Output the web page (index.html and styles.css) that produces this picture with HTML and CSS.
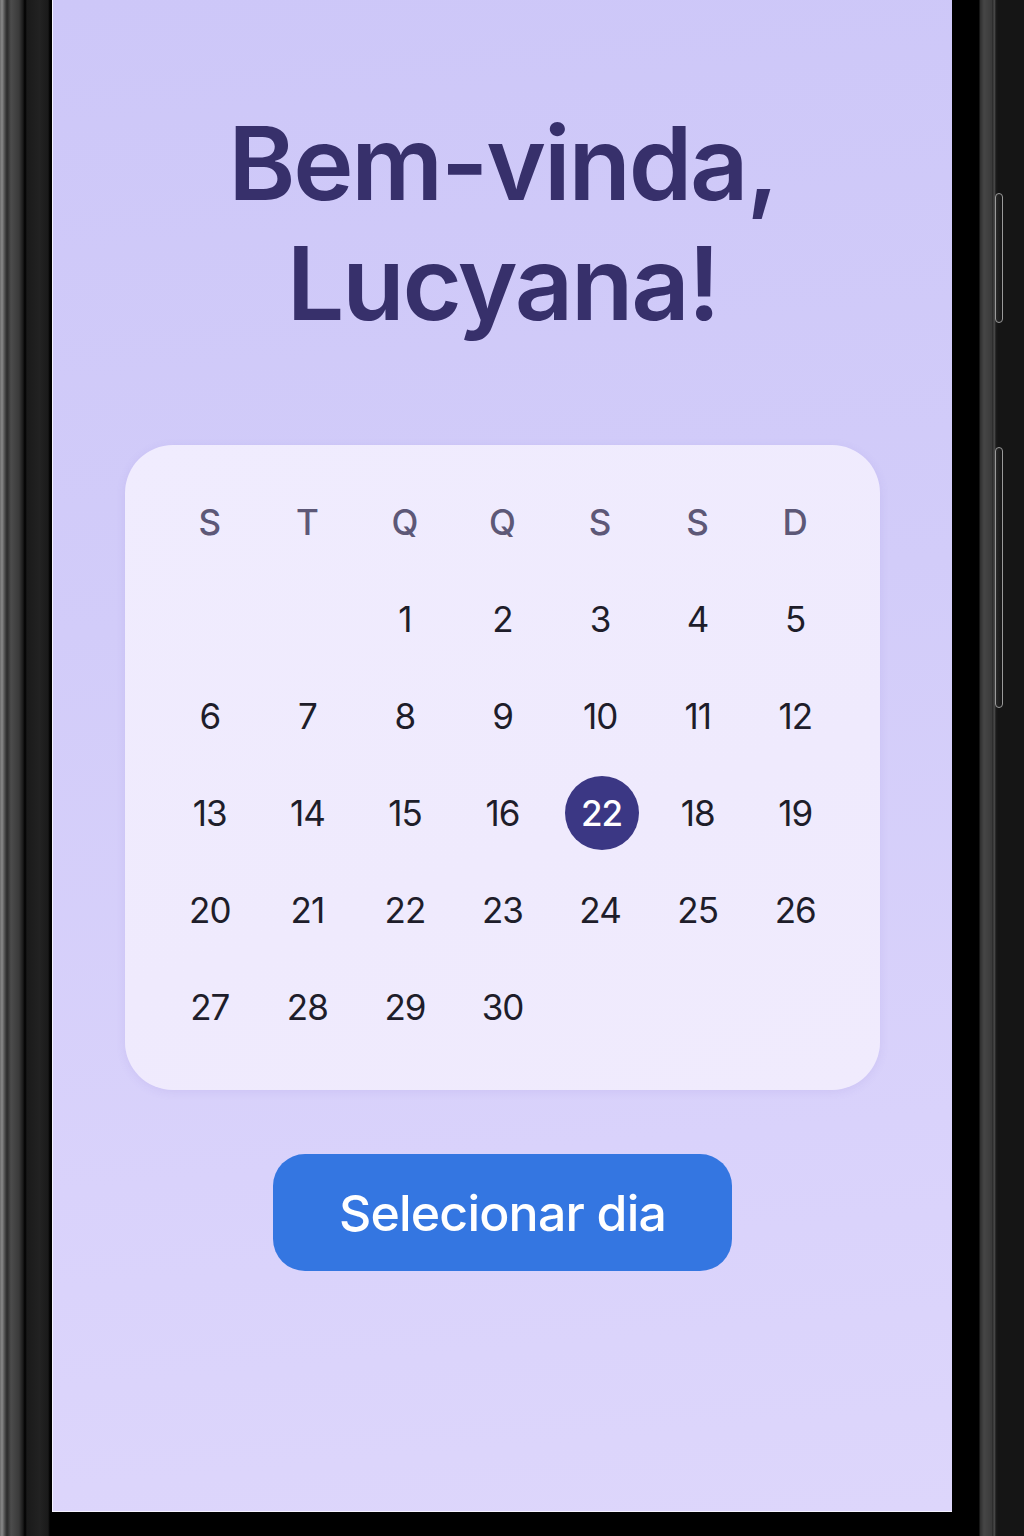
FILE: index.html
```html
<!DOCTYPE html>
<html lang="pt-BR">
<head>
<meta charset="utf-8">
<title>Bem-vinda</title>
<link rel="stylesheet" href="styles.css">
</head>
<body>
<div class="device">
  <div class="bezel-left"></div>
  <div class="middle">
    <main class="screen">
      <h1 class="title">Bem-vinda,<br>Lucyana!</h1>
      <section class="calendar">
        <div class="wd">S</div><div class="wd">T</div><div class="wd">Q</div><div class="wd">Q</div><div class="wd">S</div><div class="wd">S</div><div class="wd">D</div>
        <div class="day"></div><div class="day"></div><div class="day">1</div><div class="day">2</div><div class="day">3</div><div class="day">4</div><div class="day">5</div>
        <div class="day">6</div><div class="day">7</div><div class="day">8</div><div class="day">9</div><div class="day">10</div><div class="day">11</div><div class="day">12</div>
        <div class="day">13</div><div class="day">14</div><div class="day">15</div><div class="day">16</div><div class="day"><span class="sel">22</span></div><div class="day">18</div><div class="day">19</div>
        <div class="day">20</div><div class="day">21</div><div class="day">22</div><div class="day">23</div><div class="day">24</div><div class="day">25</div><div class="day">26</div>
        <div class="day">27</div><div class="day">28</div><div class="day">29</div><div class="day">30</div><div class="day"></div><div class="day"></div><div class="day"></div>
      </section>
      <button class="cta" type="button">Selecionar dia</button>
    </main>
    <div class="bezel-bottom"></div>
  </div>
  <div class="bezel-right">
    <span class="side-btn btn-a"></span>
    <span class="side-btn btn-b"></span>
  </div>
</div>
</body>
</html>
```
FILE: styles.css
```css
* { box-sizing: border-box; }
html, body { margin: 0; padding: 0; }
body {
  width: 1024px;
  height: 1536px;
  overflow: hidden;
  background: #000;
  font-family: Inter, "Noto Sans", "Liberation Sans", sans-serif;
}
.device {
  display: flex;
  width: 1024px;
  height: 1536px;
}
.bezel-left {
  width: 52px;
  flex: none;
  background: linear-gradient(to right,
    #6a6a6a 0, #8a8a8a 2px, #4a4a4a 5px, #2a2a2a 7px,
    #4c4c4c 11px, #3a3a3a 19px, #1a1a1a 23px, #000 25px,
    #1a1a1a 27px, #222 40px, #1a1a1a 48px, #000 50px);
}
.middle {
  width: 900px;
  flex: none;
  display: flex;
  flex-direction: column;
}
.screen {
  height: 1512px;
  flex: none;
  border-left: 1px solid #f4f2ff;
  border-bottom: 1px solid #f4f2ff;
  background: linear-gradient(175deg, #cdc7f8 0%, #d2ccf9 40%, #d9d2fb 75%, #ddd6fb 100%);
  display: flex;
  flex-direction: column;
  align-items: center;
  padding-top: 103px;
}
.bezel-bottom {
  flex: 1;
  background: #000;
}
.bezel-right {
  position: relative;
  width: 72px;
  flex: none;
  background: linear-gradient(to right,
    #000 0, #000 27px, #2e2e2e 28px, #464646 32px, #3a3a3a 40px,
    #222 41px, #555 42px, #1c1c1c 44px, #151515 46px, #151515 72px);
}
.side-btn {
  position: absolute;
  left: 43px;
  width: 8px;
  border: 1px solid #9a9a9a;
  border-radius: 5px;
  background: linear-gradient(to right, #2a2a2a, #141414);
}
.btn-a { top: 193px; height: 130px; }
.btn-b { top: 447px; height: 261px; }

.title {
  margin: 0;
  color: #37306b;
  font-size: 102px;
  font-weight: 600;
  line-height: 120px;
  letter-spacing: -2.2px;
  text-align: center;
}
.calendar {
  margin-top: 102px;
  width: 755px;
  height: 645px;
  border-radius: 48px;
  background: linear-gradient(160deg, #f0ecfe 0%, #efeafd 60%, #f0ebfd 100%);
  box-shadow: 0 2px 10px rgba(120, 100, 200, 0.12);
  padding: 28px 36px 34px;
  display: grid;
  grid-template-columns: repeat(7, 1fr);
  grid-auto-rows: 97px;
}
.wd, .day {
  display: flex;
  align-items: center;
  justify-content: center;
  font-size: 35px;
}
.wd {
  color: #5d5877;
  font-weight: 500;
}
.day {
  color: #1e1d2a;
  font-weight: 400;
  letter-spacing: -1px;
}
.sel {
  width: 74px;
  height: 74px;
  margin-left: 3px;
  border-radius: 50%;
  background: #3b3784;
  color: #fff;
  font-weight: 500;
  display: flex;
  align-items: center;
  justify-content: center;
}
.cta {
  margin-top: 64px;
  width: 459px;
  height: 117px;
  border: none;
  border-radius: 32px;
  background: #3476e1;
  color: #fff;
  font-family: inherit;
  font-size: 50px;
  font-weight: 500;
  letter-spacing: -0.8px;
  padding: 0;
}
```
